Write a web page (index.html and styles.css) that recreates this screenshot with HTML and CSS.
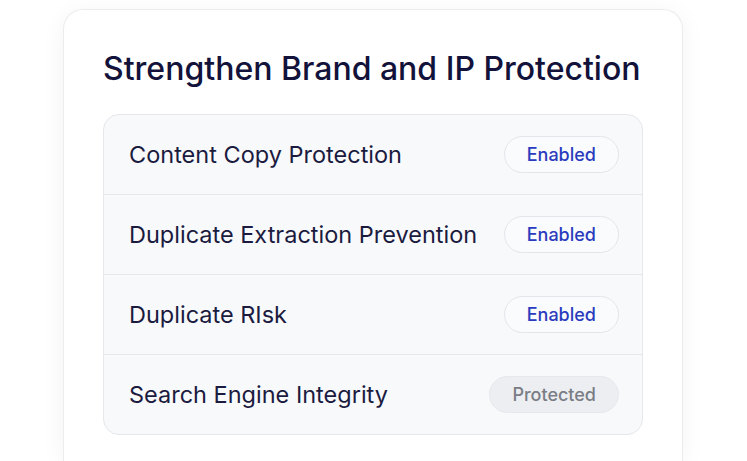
FILE: index.html
```html
<!DOCTYPE html>
<html>
<head>
<meta charset="utf-8">
<link rel="stylesheet" href="styles.css">
</head>
<body>
<div class="card">
  <h1 class="title">Strengthen Brand and IP Protection</h1>
  <div class="list">
    <div class="row"><span class="label">Content Copy Protection</span><span class="badge">Enabled</span></div>
    <div class="row"><span class="label">Duplicate Extraction Prevention</span><span class="badge">Enabled</span></div>
    <div class="row"><span class="label">Duplicate RIsk</span><span class="badge">Enabled</span></div>
    <div class="row"><span class="label">Search Engine Integrity</span><span class="badge muted">Protected</span></div>
  </div>
</div>
</body>
</html>
```
FILE: styles.css
```css
html, body {
  margin: 0;
  padding: 0;
  background: #ffffff;
  overflow: hidden;
}
body {
  font-family: Inter, "Noto Sans", sans-serif;
  width: 747px;
  height: 461px;
}
.card {
  margin: 9px 0 0 63px;
  width: 620px;
  height: 452px;
  box-sizing: border-box;
  border: 1px solid #ececef;
  border-bottom: none;
  border-radius: 20px 20px 0 0;
  background: #fff;
  box-shadow: 0 4px 24px rgba(20, 20, 60, 0.05);
  padding: 39px 39px 0 39px;
}
.title {
  margin: 0 0 25px 0;
  font-size: 32px;
  line-height: 40px;
  font-weight: 500;
  color: #12123a;
}
.list {
  border: 1px solid #e5e7eb;
  border-radius: 16px;
  background: #f8f9fb;
  overflow: hidden;
}
.row {
  height: 79px;
  display: flex;
  align-items: center;
  justify-content: space-between;
  padding: 0 23px 0 25px;
  border-bottom: 1px solid #e5e7eb;
}
.row:last-child {
  border-bottom: none;
}
.label {
  font-size: 23.5px;
  color: #1b1b3f;
}
.badge {
  height: 37px;
  box-sizing: border-box;
  display: flex;
  align-items: center;
  padding: 0 22px;
  border: 1px solid #e3e5ea;
  border-radius: 19px;
  background: #fafbfc;
  color: #2a3bbd;
  font-size: 18px;
  font-weight: 500;
}
.badge.muted {
  background: #eceef2;
  border-color: #e6e8ec;
  color: #7a7d85;
}
```
